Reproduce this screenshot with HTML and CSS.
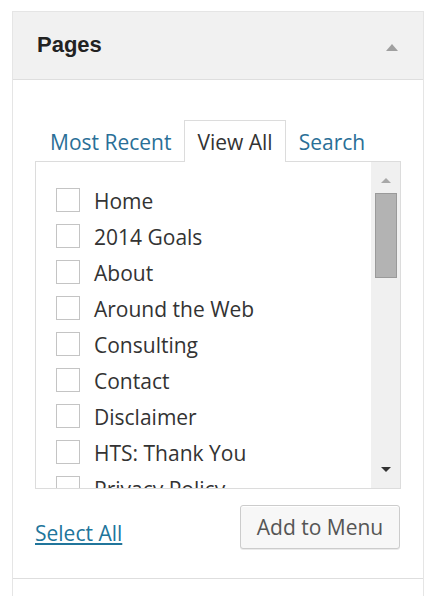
FILE: index.html
```html
<!DOCTYPE html>
<html lang="en">
<head>
    <meta charset="UTF-8">
    <meta name="viewport" content="width=device-width, initial-scale=1.0">
    <title>Pages</title>
    <link rel="stylesheet" href="styles.css">
</head>
<body>
    <div class="menuBox">
        <div class="boxHeader">
            <h3>Pages</h3>
            <span class="toggleArrow"></span>
        </div>
        <div class="boxBody">
            <ul class="tabs">
                <li><a href="#">Most Recent</a></li>
                <li class="active"><a href="#">View All</a></li>
                <li><a href="#">Search</a></li>
            </ul>
            <div class="listPanel">
                <ul class="pageList">
                    <li><span class="check"></span>Home</li>
                    <li><span class="check"></span>2014 Goals</li>
                    <li><span class="check"></span>About</li>
                    <li><span class="check"></span>Around the Web</li>
                    <li><span class="check"></span>Consulting</li>
                    <li><span class="check"></span>Contact</li>
                    <li><span class="check"></span>Disclaimer</li>
                    <li><span class="check"></span>HTS: Thank You</li>
                    <li><span class="check"></span>Privacy Policy</li>
                </ul>
                <div class="scrollBar">
                    <span class="arrowUp"></span>
                    <span class="thumb"></span>
                    <span class="arrowDown"></span>
                </div>
            </div>
            <div class="boxActions">
                <a href="#" class="selectAll">Select All</a>
                <button class="addButton">Add to Menu</button>
            </div>
        </div>
        <div class="nextBox"></div>
    </div>
</body>
</html>
```

FILE: styles.css
```css
body {
    margin: 0;
    padding: 11px 12px 0 12px;
    background: #fff;
    font-family: "Open Sans", "Liberation Sans", sans-serif;
    color: #333;
}
.menuBox {
    width: 410px;
    border: 1px solid #e5e5e5;
    border-bottom: none;
}
.boxHeader {
    height: 67px;
    background: #f1f1f1;
    border-bottom: 1px solid #dedede;
    display: flex;
    align-items: center;
    justify-content: space-between;
    padding: 0 25px 0 24px;
}
.boxHeader h3 {
    margin: 0 0 2px 0;
    font-family: "Liberation Sans", Arial, sans-serif;
    font-size: 22px;
    font-weight: bold;
    color: #222;
}
.toggleArrow {
    width: 0;
    height: 0;
    border-left: 6px solid transparent;
    border-right: 6px solid transparent;
    border-bottom: 7px solid #a0a0a0;
    margin-top: 4px;
}
.boxBody {
    padding: 40px 22px 0 22px;
    height: 458px;
}
.tabs {
    list-style: none;
    margin: 0;
    padding: 0 0 0 2px;
    display: flex;
    position: relative;
    z-index: 1;
}
.tabs li {
    height: 40px;
    padding: 0 12px;
    border: 1px solid transparent;
    border-bottom: none;
    font-size: 21px;
    line-height: 42px;
}
.tabs li a {
    color: #2a6f97;
    text-decoration: none;
}
.tabs li.active {
    background: #fff;
    border-color: #dcdcdc;
    height: 41px;
    margin-bottom: -1px;
}
.tabs li.active a {
    color: #333;
}
.listPanel {
    height: 326px;
    border: 1px solid #dcdcdc;
    display: flex;
    overflow: hidden;
}
.pageList {
    list-style: none;
    margin: 0;
    padding: 21px 0 0 20px;
    flex: 1;
}
.pageList li {
    height: 36px;
    display: flex;
    align-items: center;
    font-size: 21px;
    color: #333;
}
.check {
    width: 22px;
    height: 22px;
    border: 1px solid #c4c4c4;
    background: #fff;
    margin-right: 14px;
    flex-shrink: 0;
    position: relative;
    top: -1px;
}
.scrollBar {
    width: 29px;
    background: #f0f0f0;
    display: flex;
    flex-direction: column;
    align-items: center;
}
.arrowUp {
    margin-top: 16px;
    width: 0;
    height: 0;
    border-left: 5px solid transparent;
    border-right: 5px solid transparent;
    border-bottom: 5px solid #a8a8a8;
}
.thumb {
    margin-top: 10px;
    width: 20px;
    height: 83px;
    background: #b3b3b3;
    border: 1px solid #9a9a9a;
}
.arrowDown {
    margin-top: auto;
    margin-bottom: 16px;
    width: 0;
    height: 0;
    border-left: 5px solid transparent;
    border-right: 5px solid transparent;
    border-top: 5px solid #333;
}
.boxActions {
    display: flex;
    justify-content: space-between;
    align-items: center;
    margin-top: 16px;
}
.selectAll {
    font-size: 21px;
    color: #21759b;
    text-decoration: underline;
    margin-top: 12px;
}
.addButton {
    width: 160px;
    height: 44px;
    margin-right: 1px;
    background: #f7f7f7;
    border: 1px solid #cccccc;
    border-radius: 3px;
    box-shadow: inset 0 1px 0 #fff, 0 1px 0 rgba(0, 0, 0, 0.08);
    font-family: "Open Sans", "Liberation Sans", sans-serif;
    font-size: 21px;
    color: #555;
    padding: 0;
}
.nextBox {
    height: 20px;
    border-top: 1px solid #dedede;
}
```
